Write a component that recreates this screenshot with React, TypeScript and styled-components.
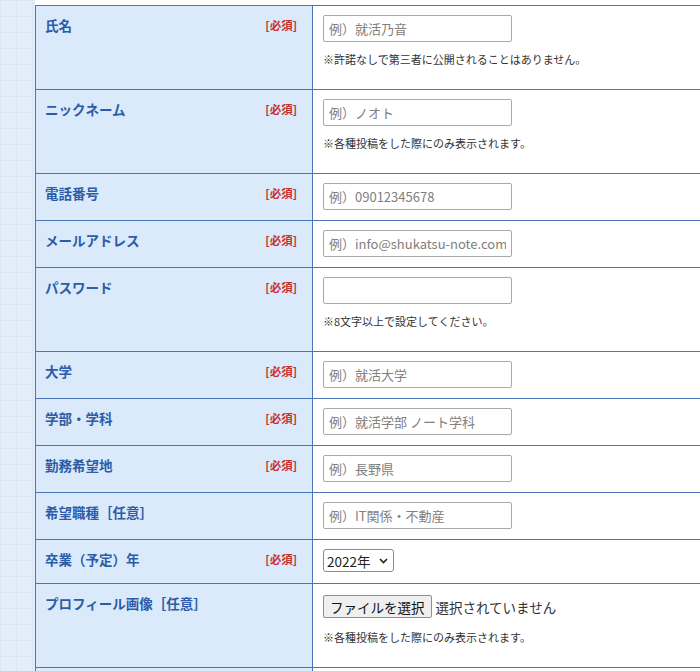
import styled, { createGlobalStyle } from "styled-components";

const GlobalStyle = createGlobalStyle`
  html, body {
    margin: 0;
    padding: 0;
    overflow: hidden;
  }
  body {
    font-family: "Noto Sans CJK JP", "Noto Sans", sans-serif;
    color: #333;
    background-color: #e3eefa;
    background-image:
      linear-gradient(#d8e6f5 1px, transparent 1px),
      linear-gradient(90deg, #d8e6f5 1px, transparent 1px);
    background-size: 16px 16px;
  }
`;

const Page = styled.div`
  padding-left: 35px;
`;

const Sheet = styled.div`
  background: #fff;
  width: 720px;
  padding-top: 5px;
`;

const Table = styled.table`
  width: 100%;
  border-collapse: collapse;
  border-left: 1px solid #4a76b7;
  border-top: 1px solid #4a76b7;
`;

const Row = styled.tr`
  border-bottom: 1px solid #4a76b7;
`;

const Label = styled.th`
  width: 252px;
  background: #dbeafb;
  border-right: 1px solid #4a76b7;
  padding: 9px 15px 9px 9px;
  text-align: left;
  vertical-align: top;
  font-weight: bold;
  font-size: 13.5px;
  line-height: 20px;
  color: #2c5ca8;
`;

const LabelInner = styled.div`
  display: flex;
  justify-content: space-between;
  align-items: center;
`;

const Required = styled.span`
  font-size: 11.5px;
  font-weight: bold;
  color: #c9302c;
`;

const Cell = styled.td`
  padding: 9px 10px 10px;
  vertical-align: top;
`;

const TextInput = styled.input`
  display: block;
  box-sizing: border-box;
  width: 189px;
  height: 27px;
  margin: 0;
  padding: 0 5px;
  border: 1px solid #a9a9a9;
  border-radius: 2px;
  font-family: "Noto Sans CJK JP", "Noto Sans", sans-serif;
  font-size: 13px;
  color: #333;
  &::placeholder {
    color: #808080;
  }
`;

const Note = styled.p`
  margin: 9px 0 11px;
  font-size: 11px;
  line-height: 17px;
  color: #333;
`;

const SelectWrap = styled.div`
  position: relative;
  display: inline-block;
  vertical-align: top;
`;

const Select = styled.select`
  display: block;
  appearance: none;
  box-sizing: border-box;
  width: 71px;
  height: 23px;
  margin: 0;
  padding: 0 16px 0 3px;
  border: 1px solid #8a8a8a;
  border-radius: 3px;
  background: #fff;
  font-family: "Noto Sans CJK JP", "Noto Sans", sans-serif;
  font-size: 13.5px;
  color: #222;
`;

const Chevron = styled.svg`
  position: absolute;
  right: 6px;
  top: 9px;
  pointer-events: none;
`;

const FileRow = styled.div`
  display: flex;
  align-items: center;
  gap: 4px;
  min-height: 27px;
  font-size: 13.5px;
  color: #333;
`;

const FileButton = styled.button`
  height: 23px;
  padding: 0 6px;
  border: 1px solid #8f8f8f;
  border-radius: 2px;
  background: #efefef;
  font-family: "Noto Sans CJK JP", "Noto Sans", sans-serif;
  font-size: 13.5px;
  color: #111;
`;

const BlankRow = styled.tr`
  height: 40px;
`;

type Field = {
  label: string;
  required: boolean;
  placeholder?: string;
  note?: string;
  type?: string;
};

const fields: Field[] = [
  { label: "氏名", required: true, placeholder: "例）就活乃音", note: "※許諾なしで第三者に公開されることはありません。" },
  { label: "ニックネーム", required: true, placeholder: "例）ノオト", note: "※各種投稿をした際にのみ表示されます。" },
  { label: "電話番号", required: true, placeholder: "例）09012345678" },
  { label: "メールアドレス", required: true, placeholder: "例）info@shukatsu-note.com" },
  { label: "パスワード", required: true, type: "password", note: "※8文字以上で設定してください。" },
  { label: "大学", required: true, placeholder: "例）就活大学" },
  { label: "学部・学科", required: true, placeholder: "例）就活学部 ノート学科" },
  { label: "勤務希望地", required: true, placeholder: "例）長野県" },
  { label: "希望職種［任意］", required: false, placeholder: "例）IT関係・不動産" },
];

function LabelCell({ label, required }: { label: string; required: boolean }) {
  return (
    <Label>
      <LabelInner>
        <span>{label}</span>
        {required && <Required>[必須]</Required>}
      </LabelInner>
    </Label>
  );
}

export default function App() {
  return (
    <Page>
      <GlobalStyle />
      <Sheet>
        <Table>
          <tbody>
            {fields.map((f) => (
              <Row key={f.label}>
                <LabelCell label={f.label} required={f.required} />
                <Cell>
                  <TextInput type={f.type || "text"} placeholder={f.placeholder} />
                  {f.note && <Note>{f.note}</Note>}
                </Cell>
              </Row>
            ))}
            <Row>
              <LabelCell label="卒業（予定）年" required />
              <Cell>
                <SelectWrap>
                  <Select defaultValue="2022">
                    <option value="2022">2022年</option>
                    <option value="2023">2023年</option>
                    <option value="2024">2024年</option>
                  </Select>
                  <Chevron width="9" height="6" viewBox="0 0 9 6">
                    <path d="M1 1l3.5 3.5L8 1" fill="none" stroke="#222" strokeWidth="1.6" />
                  </Chevron>
                </SelectWrap>
              </Cell>
            </Row>
            <Row>
              <LabelCell label="プロフィール画像［任意］" required={false} />
              <Cell>
                <FileRow>
                  <FileButton type="button">ファイルを選択</FileButton>
                  <span>選択されていません</span>
                </FileRow>
                <Note>※各種投稿をした際にのみ表示されます。</Note>
              </Cell>
            </Row>
            <BlankRow>
              <Label />
              <Cell />
            </BlankRow>
          </tbody>
        </Table>
      </Sheet>
    </Page>
  );
}
